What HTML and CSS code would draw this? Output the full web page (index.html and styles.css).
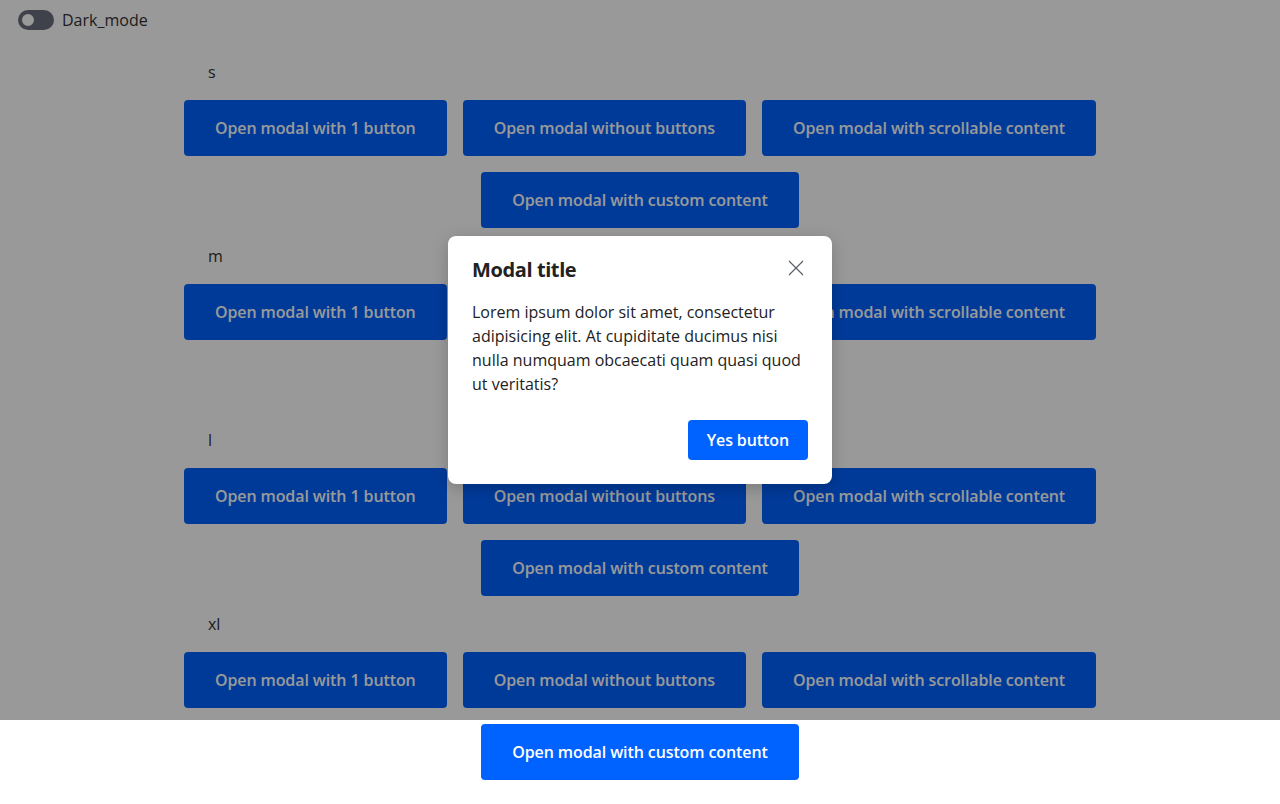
FILE: index.html
```html
<!DOCTYPE html>
<html lang="en">
<head>
<meta charset="utf-8">
<title>Modal</title>
<link rel="stylesheet" href="styles.css">
</head>
<body>
<header class="topbar">
  <label class="toggle">
    <span class="track"><span class="knob"></span></span>
    <span class="toggle-label">Dark_mode</span>
  </label>
</header>
<main class="page">
  <section class="group">
    <div class="size-label">s</div>
    <div class="row">
      <button class="btn">Open modal with 1 button</button>
      <button class="btn">Open modal without buttons</button>
      <button class="btn">Open modal with scrollable content</button>
    </div>
    <div class="row">
      <button class="btn">Open modal with custom content</button>
    </div>
  </section>
  <section class="group">
    <div class="size-label">m</div>
    <div class="row">
      <button class="btn">Open modal with 1 button</button>
      <button class="btn">Open modal without buttons</button>
      <button class="btn">Open modal with scrollable content</button>
    </div>
    <div class="row">
      <button class="btn">Open modal with custom content</button>
    </div>
  </section>
  <section class="group">
    <div class="size-label">l</div>
    <div class="row">
      <button class="btn">Open modal with 1 button</button>
      <button class="btn">Open modal without buttons</button>
      <button class="btn">Open modal with scrollable content</button>
    </div>
    <div class="row">
      <button class="btn">Open modal with custom content</button>
    </div>
  </section>
  <section class="group">
    <div class="size-label">xl</div>
    <div class="row">
      <button class="btn">Open modal with 1 button</button>
      <button class="btn">Open modal without buttons</button>
      <button class="btn">Open modal with scrollable content</button>
    </div>
    <div class="row">
      <button class="btn">Open modal with custom content</button>
    </div>
  </section>
</main>
<div class="overlay">
  <div class="modal" role="dialog">
    <div class="modal-head">
      <h2 class="modal-title">Modal title</h2>
      <button class="close" aria-label="Close">
        <svg width="16" height="16" viewBox="0 0 16 16" fill="none" stroke="#5c5f6b" stroke-width="1.2"><path d="M1 1 L15 15 M15 1 L1 15"/></svg>
      </button>
    </div>
    <p class="modal-body">Lorem ipsum dolor sit amet, consectetur adipisicing elit. At cupiditate ducimus nisi nulla numquam obcaecati quam quasi quod ut veritatis?</p>
    <div class="modal-foot">
      <button class="btn-primary">Yes button</button>
    </div>
  </div>
</div>
</body>
</html>
```
FILE: styles.css
```css
* { box-sizing: border-box; }
html, body { margin: 0; padding: 0; }
body {
  font-family: "Open Sans", "Noto Sans", sans-serif;
  color: #333;
  background: #fff;
  font-size: 16px;
  position: relative;
  min-height: 804px;
}
.topbar {
  height: 40px;
  padding: 0 18px;
  display: flex;
  align-items: center;
}
.toggle {
  display: flex;
  align-items: center;
  gap: 8px;
}
.track {
  width: 36px;
  height: 20px;
  border-radius: 10px;
  background: #6b6f7e;
  display: flex;
  align-items: center;
  padding: 0 2px;
}
.knob {
  width: 16px;
  height: 16px;
  border-radius: 50%;
  background: #fff;
  border: 2px solid #6b6f7e;
}
.toggle-label {
  font-size: 16px;
  line-height: 20px;
  letter-spacing: 0;
}
.page {
  padding-top: 20px;
  display: flex;
  flex-direction: column;
  gap: 16px;
  align-items: center;
}
.group {
  display: flex;
  flex-direction: column;
  gap: 16px;
}
.size-label {
  padding-left: 24px;
  line-height: 24px;
  height: 24px;
  font-size: 16px;
}
.row {
  display: flex;
  justify-content: center;
  gap: 16px;
}
.btn, .btn-primary {
  font-family: inherit;
  font-weight: 600;
  font-size: 16px;
  letter-spacing: -0.1px;
  white-space: nowrap;
  flex-shrink: 0;
  color: #fff;
  background: #0062ff;
  border: 0;
  border-radius: 4px;
  height: 56px;
  padding: 0 31px;
  cursor: pointer;
}
.overlay {
  position: absolute;
  top: 0;
  left: 0;
  right: 0;
  height: 720px;
  background: rgba(0, 0, 0, 0.4);
  display: flex;
  align-items: center;
  justify-content: center;
}
.modal {
  width: 384px;
  background: #fff;
  border-radius: 8px;
  padding: 19px 24px 24px;
  box-shadow: 0 4px 16px rgba(0, 0, 0, 0.2);
}
.modal-head {
  display: flex;
  justify-content: space-between;
  align-items: center;
  height: 28px;
}
.modal-title {
  margin: 0;
  font-size: 20px;
  font-weight: 700;
  letter-spacing: -0.4px;
  color: #222;
}
.close {
  background: none;
  border: 0;
  padding: 0;
  width: 16px;
  height: 16px;
  margin: 0 4px 2px 0;
  display: flex;
}
.modal-body {
  margin: 17px 0 0;
  line-height: 24px;
  font-size: 16px;
  letter-spacing: 0;
  color: #222;
}
.modal-foot {
  display: flex;
  justify-content: flex-end;
  margin-top: 24px;
}
.btn-primary {
  height: 40px;
  padding: 0 19px;
}
```
